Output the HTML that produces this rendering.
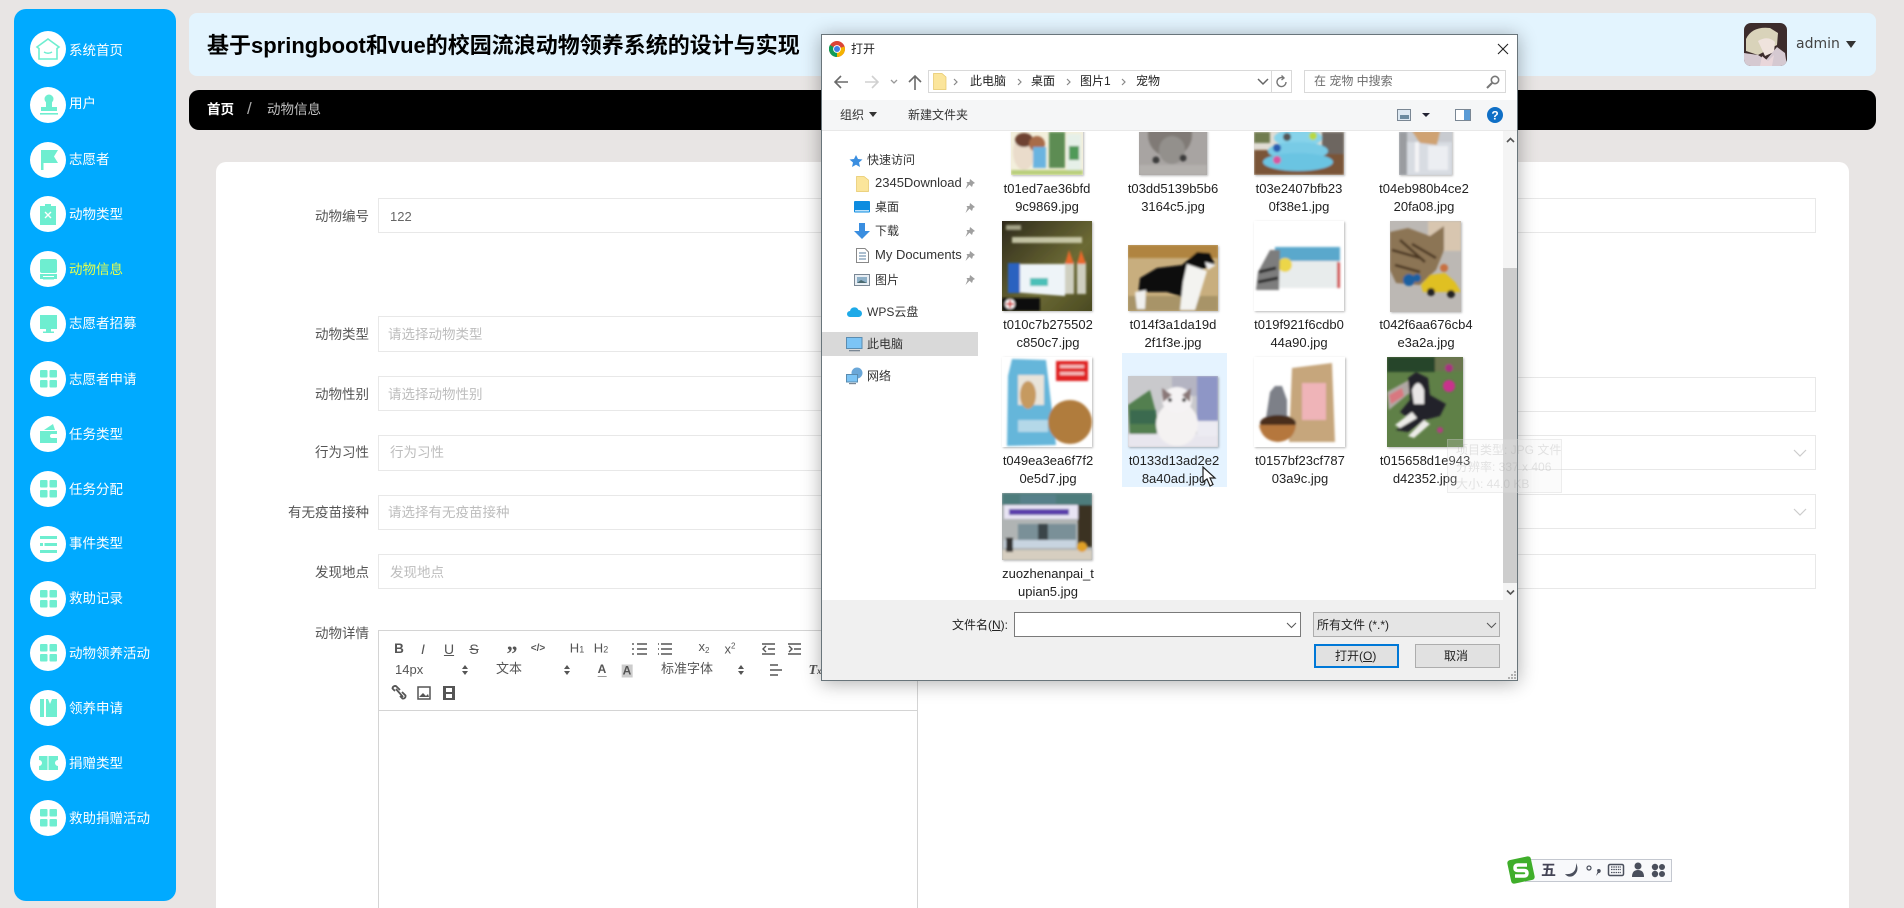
<!DOCTYPE html>
<html lang="zh"><head><meta charset="utf-8"><title>动物信息</title>
<style>
html,body{margin:0;padding:0;width:1904px;height:908px;overflow:hidden;background:#e8e5e4;font-family:"Liberation Sans","Noto Sans CJK SC",sans-serif}
#w{position:absolute;left:0;top:0;width:1904px;height:908px;overflow:hidden;background:#e8e5e4}
div,span{box-sizing:border-box}
.a{position:absolute}
.t{position:absolute;white-space:nowrap;line-height:20px;height:20px}
.nc{position:absolute;left:30px;width:36px;height:36px;border-radius:50%;background:#fff}
.nc svg{position:absolute;left:0;top:0}
.nt{position:absolute;left:69px;color:#fff;font-size:13.5px;line-height:20px;white-space:nowrap}
.lb{position:absolute;right:1535px;color:#555;font-size:13.5px;line-height:20px;white-space:nowrap}
.ip{position:absolute;height:35px;border:1px solid #e8e8e8;background:#fff}
.ph{position:absolute;color:#bdbdbd;font-size:13.5px;line-height:20px;white-space:nowrap}
.ed{position:absolute;color:#555;line-height:16px;white-space:nowrap;font-size:13px;transform:translate(-50%,-50%)}
.sn{position:absolute;left:875px;color:#333;font-size:12px;line-height:16px;white-space:nowrap}
.fn{position:absolute;width:104px;text-align:center;color:#222;font-size:13px;line-height:18px;white-space:nowrap}
.g{fill:#6eeed0}
</style></head><body><div id="w">

<!-- sidebar -->
<div class="a" style="left:14px;top:9px;width:162px;height:892px;background:#00aaff;border-radius:12px"></div>

<div class="nc" style="top:31px"><svg width="36" height="36" fill="none" stroke="#6eeed0" stroke-width="1.6"><path d="M18 8 L29 16 L27 17.5 V28 H9 V17.5 L7 16Z"/><path d="M14 21 q4 2.5 8 0" stroke-width="1.4"/></svg></div>
<div class="nt" style="top:41px">系统首页</div>
<div class="nc" style="top:87px"><svg width="36" height="36"><circle class="g" cx="19" cy="12" r="4.5"/><rect class="g" x="16" y="14" width="6" height="6"/><rect class="g" x="11" y="20" width="16" height="4"/><rect class="g" x="10" y="26" width="18" height="1.6"/></svg></div>
<div class="nt" style="top:94px">用户</div>
<div class="nc" style="top:142px"><svg width="36" height="36"><rect class="g" x="11" y="8" width="2.5" height="20"/><path class="g" d="M13.5 8 H28 L24 14.5 L28 21 H13.5Z"/></svg></div>
<div class="nt" style="top:150px">志愿者</div>
<div class="nc" style="top:196px"><svg width="36" height="36"><path class="g" d="M10 10 H15 V8 H21 V10 H26 V29 H10Z"/><path d="M15 16 L21 22 M21 16 L15 22" stroke="#fff" stroke-width="1.4"/></svg></div>
<div class="nt" style="top:205px">动物类型</div>
<div class="nc" style="top:251px"><svg width="36" height="36"><rect class="g" x="10" y="8" width="17" height="14" rx="2"/><path class="g" d="M10 23 H27 V28 H24 V25 H13 V28 H10Z"/><rect class="g" x="13" y="26" width="11" height="2.5"/></svg></div>
<div class="nt" style="top:260px;color:#e4ff4e">动物信息</div>
<div class="nc" style="top:306px"><svg width="36" height="36"><rect class="g" x="10" y="9" width="17" height="14"/><rect class="g" x="16" y="23" width="5" height="2.5"/><rect class="g" x="13" y="25.5" width="11" height="1.5"/></svg></div>
<div class="nt" style="top:314px">志愿者招募</div>
<div class="nc" style="top:361px"><svg width="36" height="36"><rect class="g" x="10" y="9" width="7.5" height="7.5" rx="1"/><rect class="g" x="19.5" y="9" width="7.5" height="7.5" rx="1"/><rect class="g" x="10" y="19" width="7.5" height="7.5" rx="1"/><rect class="g" x="19.5" y="19" width="7.5" height="7.5" rx="1"/></svg></div>
<div class="nt" style="top:370px">志愿者申请</div>
<div class="nc" style="top:416px"><svg width="36" height="36"><path class="g" d="M10 15 H27 V27 H10Z"/><path class="g" d="M14 14 L23 8 L25 14Z"/><path d="M27 18 H22 a1.8 1.8 0 0 0 0 4 H27Z" fill="#fff"/></svg></div>
<div class="nt" style="top:425px">任务类型</div>
<div class="nc" style="top:471px"><svg width="36" height="36"><rect class="g" x="10" y="9" width="7.5" height="7.5" rx="1"/><rect class="g" x="19.5" y="9" width="7.5" height="7.5" rx="1"/><rect class="g" x="10" y="19" width="7.5" height="7.5" rx="1"/><rect class="g" x="19.5" y="19" width="7.5" height="7.5" rx="1"/></svg></div>
<div class="nt" style="top:480px">任务分配</div>
<div class="nc" style="top:526px"><svg width="36" height="36"><rect class="g" x="10" y="10" width="17" height="3"/><rect class="g" x="10" y="17" width="17" height="3"/><rect class="g" x="10" y="24" width="17" height="3"/><rect x="13" y="17" width="1.5" height="3" fill="#fff"/></svg></div>
<div class="nt" style="top:534px">事件类型</div>
<div class="nc" style="top:581px"><svg width="36" height="36"><rect class="g" x="10" y="9" width="7.5" height="7.5" rx="1"/><rect class="g" x="19.5" y="9" width="7.5" height="7.5" rx="1"/><rect class="g" x="10" y="19" width="7.5" height="7.5" rx="1"/><rect class="g" x="19.5" y="19" width="7.5" height="7.5" rx="1"/></svg></div>
<div class="nt" style="top:589px">救助记录</div>
<div class="nc" style="top:635px"><svg width="36" height="36"><rect class="g" x="10" y="9" width="7.5" height="7.5" rx="1"/><rect class="g" x="19.5" y="9" width="7.5" height="7.5" rx="1"/><rect class="g" x="10" y="19" width="7.5" height="7.5" rx="1"/><rect class="g" x="19.5" y="19" width="7.5" height="7.5" rx="1"/></svg></div>
<div class="nt" style="top:644px">动物领养活动</div>
<div class="nc" style="top:690px"><svg width="36" height="36"><path class="g" d="M10 9 H14 V27 H10Z M16 9 H18 L20 14 L22 9 H27 V27 H16Z"/></svg></div>
<div class="nt" style="top:699px">领养申请</div>
<div class="nc" style="top:745px"><svg width="36" height="36"><path class="g" d="M9 11 H28 V15 a3 3 0 0 0 0 6 V25 H9 V21 a3 3 0 0 0 0 -6Z"/><rect x="17" y="11" width="2" height="14" fill="#fff" opacity=".5"/></svg></div>
<div class="nt" style="top:754px">捐赠类型</div>
<div class="nc" style="top:800px"><svg width="36" height="36"><rect class="g" x="10" y="9" width="7.5" height="7.5" rx="1"/><rect class="g" x="19.5" y="9" width="7.5" height="7.5" rx="1"/><rect class="g" x="10" y="19" width="7.5" height="7.5" rx="1"/><rect class="g" x="19.5" y="19" width="7.5" height="7.5" rx="1"/></svg></div>
<div class="nt" style="top:809px">救助捐赠活动</div>

<!-- header -->
<div class="a" style="left:189px;top:13px;width:1687px;height:63px;background:#e3f4fe;border-radius:8px"></div>
<div class="t" style="left:207px;top:34px;height:24px;line-height:24px;font-size:22px;font-weight:700;color:#000">基于springboot和vue的校园流浪动物领养系统的设计与实现</div>
<svg class="a" style="left:1744px;top:23px;border-radius:7px" width="43" height="43">
<rect width="43" height="43" fill="#3c2c2c"/><path d="M2 16 Q8 3 26 5 L34 10 L33 22 L14 32 L2 28Z" fill="#d9d3ba"/><path d="M14 18 Q24 12 31 19 L30 29 L21 33 Z" fill="#efe3dd"/><path d="M0 30 L14 32 L22 37 L33 24 L41 30 L43 43 H0Z" fill="#d5c9d1"/><path d="M18 33 L24 38 L30 32 L28 43 H16Z" fill="#e9d6da"/></svg>
<div class="t" style="left:1796px;top:34px;font-family:'DejaVu Sans',sans-serif;font-size:14px;color:#444">admin</div>
<svg class="a" style="left:1845px;top:40px" width="12" height="9"><path d="M1 1 H11 L6 8Z" fill="#333"/></svg>

<!-- breadcrumb -->
<div class="a" style="left:189px;top:90px;width:1687px;height:40px;background:#000;border-radius:10px"></div>
<div class="t" style="left:207px;top:100px;font-size:13.5px;font-weight:700;color:#fff">首页</div>
<div class="t" style="left:247px;top:99px;font-size:17px;color:#aaa">/</div>
<div class="t" style="left:267px;top:100px;font-size:13.5px;color:#c0c0c0">动物信息</div>

<!-- card -->
<div class="a" style="left:216px;top:162px;width:1633px;height:760px;background:#fff;border-radius:10px"></div>

<div class="lb" style="top:207px">动物编号</div>
<div class="ip" style="left:378px;top:198px;width:460px"></div>
<div class="t" style="left:390px;top:207px;font-size:13px;color:#666">122</div>

<div class="lb" style="top:325px">动物类型</div>
<div class="ip" style="left:378px;top:316px;width:460px;height:36px"></div>
<div class="ph" style="left:388px;top:325px">请选择动物类型</div>

<div class="lb" style="top:385px">动物性别</div>
<div class="ip" style="left:378px;top:376px;width:460px"></div>
<div class="ph" style="left:388px;top:385px">请选择动物性别</div>

<div class="lb" style="top:443px">行为习性</div>
<div class="ip" style="left:378px;top:435px;width:460px;height:36px"></div>
<div class="ph" style="left:390px;top:443px">行为习性</div>

<div class="lb" style="top:503px">有无疫苗接种</div>
<div class="ip" style="left:378px;top:495px;width:460px"></div>
<div class="ph" style="left:388px;top:503px">请选择有无疫苗接种</div>

<div class="lb" style="top:563px">发现地点</div>
<div class="ip" style="left:378px;top:554px;width:460px"></div>
<div class="ph" style="left:390px;top:563px">发现地点</div>

<!-- right inputs -->
<div class="ip" style="left:1500px;top:198px;width:316px"></div>
<div class="ip" style="left:1500px;top:377px;width:316px"></div>
<div class="ip" style="left:1500px;top:435px;width:316px"></div>
<div class="ip" style="left:1500px;top:494px;width:316px"></div>
<div class="ip" style="left:1500px;top:554px;width:316px"></div>
<svg class="a" style="left:1792px;top:448px" width="16" height="10"><path d="M2 2 L8 8 L14 2" fill="none" stroke="#ccc" stroke-width="1.2"/></svg>
<svg class="a" style="left:1792px;top:507px" width="16" height="10"><path d="M2 2 L8 8 L14 2" fill="none" stroke="#ccc" stroke-width="1.2"/></svg>

<!-- editor -->
<div class="lb" style="top:624px">动物详情</div>
<div class="a" style="left:378px;top:630px;width:540px;height:290px;border:1px solid #d4d4d4"></div>
<div class="a" style="left:378px;top:710px;width:540px;height:1px;background:#d4d4d4"></div>

<div class="ed" style="left:399px;top:649px;font-weight:700;font-size:13.5px">B</div>
<div class="ed" style="left:423px;top:649px;font-style:italic;font-size:14px">I</div>
<div class="ed" style="left:449px;top:649px;text-decoration:underline;font-size:14px">U</div>
<div class="ed" style="left:474px;top:649px;text-decoration:line-through;font-size:14px">S</div>
<div class="ed" style="left:512px;top:654px;font-weight:700;font-size:22px;font-family:'Liberation Serif',serif">”</div>
<div class="ed" style="left:538px;top:649px;font-size:10px;font-weight:700">&lt;/&gt;</div>
<div class="ed" style="left:577px;top:649px;font-size:13px">H<span style="font-size:9px">1</span></div>
<div class="ed" style="left:601px;top:649px;font-size:13px">H<span style="font-size:9px">2</span></div>
<svg class="a" style="left:632px;top:641px" width="175" height="16" fill="none" stroke="#555" stroke-width="1.4">
<path d="M5 3 H15 M5 8 H15 M5 13 H15 M1 2 V4 M1 7 V9 M1 12 V14"/>
<path d="M29 3 H40 M29 8 H40 M29 13 H40 M26 3 H27 M26 8 H27 M26 13 H27"/>
<path d="M130 3 H143 M136 8 H143 M130 13 H143 M134 5 L131 8 L134 11"/>
<path d="M156 3 H169 M162 8 H169 M156 13 H169 M157 5 L160 8 L157 11"/></svg>
<div class="ed" style="left:704px;top:649px;font-size:13px">x<span style="font-size:8px;vertical-align:-2px">2</span></div>
<div class="ed" style="left:730px;top:648px;font-size:13px">x<span style="font-size:8px;vertical-align:5px">2</span></div>

<div class="t" style="left:395px;top:660px;font-size:13px;color:#555">14px</div>
<div class="t" style="left:496px;top:659px;font-size:13px;color:#555">文本</div>
<div class="t" style="left:661px;top:659px;font-size:13px;color:#555">标准字体</div>
<svg class="a" style="left:460px;top:664px" width="290" height="12" fill="#555"><path d="M2 5 L5 1 L8 5Z M2 7 L5 11 L8 7Z M104 5 L107 1 L110 5Z M104 7 L107 11 L110 7Z M278 5 L281 1 L284 5Z M278 7 L281 11 L284 7Z"/></svg>
<div class="ed" style="left:602px;top:670px;font-size:12px;font-weight:700;border-bottom:1px solid #999;line-height:13px">A</div>
<div class="ed" style="left:627px;top:671px;font-size:12px;font-weight:700;background:#ccc;padding:0 1px;line-height:13px">A</div>
<svg class="a" style="left:769px;top:663px" width="14" height="14" fill="none" stroke="#555" stroke-width="1.6"><path d="M1 2 H9 M1 7 H13 M1 12 H9"/></svg>
<div class="ed" style="left:815px;top:671px;font-size:14px;font-style:italic;font-family:'Liberation Serif',serif;font-weight:700">T<span style="font-size:9px">x</span></div>

<svg class="a" style="left:391px;top:685px" width="70" height="16" fill="none" stroke="#555" stroke-width="1.8">
<path d="M4 6 L1.5 3.5 a2.5 2.5 0 0 1 4 -2 L9 5 M9 11 L11.5 13.5 a2.5 2.5 0 0 0 3 -3 L11 7 M5 4 L12 12"/>
<rect x="27" y="2" width="12" height="12" stroke-width="1.5"/><path d="M28 12 L32 8 L35 11 L37 9 L38 12Z" fill="#555" stroke="none"/>
<rect x="52" y="1" width="12" height="14" fill="#555" stroke="none"/><rect x="55" y="3" width="6" height="4" fill="#fff" stroke="none"/><rect x="55" y="9" width="6" height="4" fill="#fff" stroke="none"/></svg>

<!-- Dialog -->
<div class="a" style="left:821px;top:34px;width:697px;height:647px;background:#fff;border:1px solid #69757b;box-shadow:0 2px 18px rgba(0,0,0,.32)"></div>
<svg class="a" style="left:829px;top:41px" width="16" height="16"><circle cx="8" cy="8" r="8" fill="#db4437"/><path d="M8 8 L1.2 12.2 A8 8 0 0 0 8 16 Z" fill="#0f9d58"/><path d="M8 8 L1.2 12.2 A8 8 0 0 1 1 4 Z" fill="#0f9d58"/><path d="M8 8 L15.5 5.5 A8 8 0 0 1 8 16 Z" fill="#f4b400"/><circle cx="8" cy="8" r="3.9" fill="#fff"/><circle cx="8" cy="8" r="3" fill="#3f7ee8"/></svg>
<div class="t" style="left:851px;top:39px;font-size:12px;color:#222">打开</div>
<svg class="a" style="left:1497px;top:43px" width="12" height="12"><path d="M1 1 L11 11 M11 1 L1 11" stroke="#222" stroke-width="1.1"/></svg>

<svg class="a" style="left:832px;top:72px" width="95" height="20" fill="none">
<path d="M16 10 H4 M9 4 L3 10 L9 16" stroke="#6a6a6a" stroke-width="1.6"/>
<path d="M33 10 H45 M40 4 L46 10 L40 16" stroke="#d0d0d0" stroke-width="1.6"/>
<path d="M59 8 L62 11 L65 8" stroke="#999" stroke-width="1.3"/>
<path d="M83 18 V5 M77 10 L83 4 L89 10" stroke="#6a6a6a" stroke-width="1.6"/></svg>
<div class="a" style="left:928px;top:70px;width:344px;height:23px;border:1px solid #d9d9d9"></div>
<div class="a" style="left:1271px;top:70px;width:21px;height:23px;border:1px solid #d9d9d9"></div>
<div class="a" style="left:1304px;top:70px;width:202px;height:23px;border:1px solid #d9d9d9"></div>
<svg class="a" style="left:933px;top:73px" width="14" height="17"><path d="M0.5 0.5 H9 L13 4 V16.5 H0.5Z" fill="#fbe59b" stroke="#e6c768" stroke-width=".7"/></svg>
<svg class="a" style="left:950px;top:76px" width="270" height="12" fill="none" stroke="#888" stroke-width="1.2"><path d="M4 3 L7 6 L4 9 M68 3 L71 6 L68 9 M117 3 L120 6 L117 9 M172 3 L175 6 L172 9"/></svg>
<div class="t" style="left:970px;top:71px;font-size:12px;color:#222">此电脑</div>
<div class="t" style="left:1031px;top:71px;font-size:12px;color:#222">桌面</div>
<div class="t" style="left:1080px;top:71px;font-size:12px;color:#222">图片1</div>
<div class="t" style="left:1136px;top:71px;font-size:12px;color:#222">宠物</div>
<svg class="a" style="left:1257px;top:78px" width="12" height="8"><path d="M1 1 L6 6 L11 1" fill="none" stroke="#666" stroke-width="1.5"/></svg>
<svg class="a" style="left:1276px;top:75px" width="12" height="13" fill="none" stroke="#777" stroke-width="1.4"><path d="M10 7 a4.5 4.5 0 1 1 -3 -4.2"/><path d="M5.5 0.5 L8 3 L5.5 5" /></svg>
<div class="t" style="left:1314px;top:71px;font-size:12px;color:#6d6d6d">在 宠物 中搜索</div>
<svg class="a" style="left:1486px;top:75px" width="14" height="14" fill="none" stroke="#777" stroke-width="1.6"><circle cx="9" cy="5" r="3.7"/><path d="M6 8 L1 13" stroke-width="2"/></svg>

<div class="a" style="left:822px;top:100px;width:695px;height:31px;background:#f5f6f7;border-bottom:1px solid #e8e8e8"></div>
<div class="t" style="left:840px;top:105px;font-size:12px;color:#333">组织</div>
<svg class="a" style="left:869px;top:112px" width="9" height="6"><path d="M0 0 H8 L4 5Z" fill="#333"/></svg>
<div class="t" style="left:908px;top:105px;font-size:12px;color:#333">新建文件夹</div>
<svg class="a" style="left:1397px;top:108px" width="90" height="16">
<rect x="0.5" y="1.5" width="13" height="11" fill="#dce8f2" stroke="#7a8794"/><rect x="3" y="7" width="9" height="4" fill="#6a8aa0"/>
<path d="M25 5 H33 L29 9Z" fill="#223"/>
<rect x="58.5" y="1.5" width="15" height="11" fill="#fff" stroke="#7a8794"/><rect x="67" y="2" width="6" height="10" fill="#5b9bd5"/></svg>
<svg class="a" style="left:1487px;top:107px" width="16" height="16"><circle cx="8" cy="8" r="8" fill="#0f6fc6"/><text x="8" y="12.5" text-anchor="middle" font-family="Liberation Sans" font-size="12" font-weight="700" fill="#fff">?</text></svg>

<!-- nav pane -->
<div class="a" style="left:822px;top:332px;width:156px;height:24px;background:#d9d9d9"></div>
<svg class="a" style="left:849px;top:154px" width="14" height="14"><path d="M7 1 L9 5 L13.5 5.5 L10 8.5 L11 13 L7 10.7 L3 13 L4 8.5 L0.5 5.5 L5 5Z" fill="#3a8ee0"/></svg>
<div class="t" style="left:867px;top:150px;font-size:12px;color:#333">快速访问</div>
<svg class="a" style="left:856px;top:176px" width="13" height="16"><path d="M0.5 0.5 H8 L12.5 4 V15.5 H0.5Z" fill="#fbe59b" stroke="#e6c768" stroke-width=".7"/></svg>
<div class="sn" style="top:175px;font-size:13px">2345Download</div>
<svg class="a" style="left:854px;top:201px" width="16" height="12"><rect width="16" height="11.5" fill="#0d8ce0" rx="1"/><rect x="1" y="9" width="14" height="1.5" fill="#bfe3fb"/></svg>
<div class="sn" style="top:199px">桌面</div>
<svg class="a" style="left:854px;top:223px" width="16" height="16"><path d="M5 0 H11 V8 H16 L8 16 L0 8 H5Z" fill="#3a8ee0"/></svg>
<div class="sn" style="top:223px">下载</div>
<svg class="a" style="left:856px;top:248px" width="13" height="15"><path d="M0.5 0.5 H9 L12.5 4 V14.5 H0.5Z" fill="#fff" stroke="#888"/><path d="M3 5 H10 M3 8 H10 M3 11 H10" stroke="#5a7fa0"/></svg>
<div class="sn" style="top:247px;font-size:13px">My Documents</div>
<svg class="a" style="left:854px;top:274px" width="16" height="12"><rect x=".5" y=".5" width="15" height="11" fill="#e8eef4" stroke="#7a8794"/><rect x="3" y="3" width="10" height="6" fill="#8eb0c8"/><path d="M3 9 L7 6 L13 9Z" fill="#4a6a70"/></svg>
<div class="sn" style="top:272px">图片</div>
<svg class="a" style="left:847px;top:306px" width="15" height="12"><path d="M3 11 a3 3 0 0 1 0 -6 a4.5 4.5 0 0 1 8.5 -1 a3.5 3.5 0 0 1 0 7Z" fill="#1eaae8"/></svg>
<div class="t" style="left:867px;top:302px;font-size:12px;color:#333">WPS云盘</div>
<svg class="a" style="left:846px;top:337px" width="17" height="15"><rect x=".5" y=".5" width="15.5" height="11" fill="#7cc4f5" stroke="#5a8cb0"/><rect x="3" y="13" width="11" height="1.3" fill="#7a8794"/></svg>
<div class="t" style="left:867px;top:334px;font-size:12px;color:#333">此电脑</div>
<svg class="a" style="left:846px;top:367px" width="17" height="18"><circle cx="11" cy="6" r="5.5" fill="#6aa7d8"/><rect x=".5" y="7.5" width="11" height="7.5" fill="#7cc4f5" stroke="#5a8cb0"/><rect x="3" y="16" width="7" height="1.2" fill="#7a8794"/></svg>
<div class="t" style="left:867px;top:366px;font-size:12px;color:#333">网络</div>
<svg class="a" style="left:964px;top:178px" width="13" height="112" fill="#a0a0a0"><path d="M6 1 L11 5 L9 6 L8 9 L5.500 6.800 L1.500 11 L3.500 6 L2.500 4 L5.500 4Z M6 25 L11 29 L9 30 L8 33 L5.500 30.800 L1.500 35 L3.500 30 L2.500 28 L5.500 28Z M6 49 L11 53 L9 54 L8 57 L5.500 54.800 L1.500 59 L3.500 54 L2.500 52 L5.500 52Z M6 73 L11 77 L9 78 L8 81 L5.500 78.800 L1.500 83 L3.500 78 L2.500 76 L5.500 76Z M6 97 L11 101 L9 102 L8 105 L5.500 102.800 L1.500 107 L3.500 102 L2.500 100 L5.500 100Z"/></svg>

<!-- selection highlight -->
<div class="a" style="left:1122px;top:353px;width:105px;height:134px;background:#e5f3ff"></div>

<!-- thumbnails -->
<svg class="a" style="left:0;top:0;pointer-events:none" width="1904" height="908">
<defs>
<clipPath id="c"><rect x="1000" y="132" width="503" height="468"/></clipPath>
<filter id="b" x="-5%" y="-5%" width="110%" height="110%"><feGaussianBlur stdDeviation="1"/></filter>
<filter id="s" x="-5%" y="-5%" width="110%" height="110%"><feDropShadow dx="1" dy="1" stdDeviation="1" flood-color="#000" flood-opacity=".28"/></filter>
<linearGradient id="o" x1="0" y1="0" x2="1" y2="1"><stop offset="0" stop-color="#2e2a1c"/><stop offset=".6" stop-color="#6c6a34"/><stop offset="1" stop-color="#4a4a22"/></linearGradient>
<clipPath id="t1"><rect x="1011" y="100" width="72" height="75"/></clipPath>
<clipPath id="t2"><rect x="1139" y="100" width="68" height="75"/></clipPath>
<clipPath id="t3"><rect x="1254" y="100" width="90" height="75"/></clipPath>
<clipPath id="t4"><rect x="1399" y="100" width="53" height="75"/></clipPath>
<clipPath id="t5"><rect x="1002" y="221" width="90" height="90"/></clipPath>
<clipPath id="t6"><rect x="1128" y="245" width="90" height="66"/></clipPath>
<clipPath id="t8"><rect x="1390" y="221" width="71" height="91"/></clipPath>
<clipPath id="t10"><rect x="1128" y="376" width="90" height="71"/></clipPath>
<clipPath id="t12"><rect x="1387" y="357" width="76" height="90"/></clipPath>
<clipPath id="t13"><rect x="1002" y="493" width="90" height="67"/></clipPath>
</defs>
<g clip-path="url(#c)">
<!-- row 1 -->
<g filter="url(#s)"><rect x="1011" y="100" width="72" height="75" fill="#f3efdc"/></g>
<g clip-path="url(#t1)"><g filter="url(#b)"><rect x="1011" y="170" width="72" height="5" fill="#b9cf7c"/><ellipse cx="1024" cy="152" rx="11" ry="18" fill="#eadccb"/><ellipse cx="1024" cy="140" rx="9" ry="7" fill="#6e4330"/><ellipse cx="1037" cy="144" rx="8" ry="8" fill="#a86c48"/><rect x="1033" y="147" width="13" height="21" fill="#6ab4e0"/><rect x="1049" y="132" width="16" height="36" fill="#5d8c52"/><rect x="1067" y="134" width="14" height="36" fill="#e6f0e8"/><rect x="1069" y="146" width="10" height="14" fill="#4f9a58"/></g></g>
<g filter="url(#s)"><rect x="1139" y="100" width="68" height="75" fill="#a8a4a2"/></g>
<g clip-path="url(#t2)"><g filter="url(#b)"><ellipse cx="1170" cy="135" rx="22" ry="22" fill="#807a76"/><ellipse cx="1172" cy="150" rx="13" ry="14" fill="#93908c"/><circle cx="1156" cy="160" r="3.500" fill="#3a3a3a"/><circle cx="1183" cy="158" r="3.500" fill="#3a3a3a"/><rect x="1139" y="165" width="68" height="10" fill="#b3b0ad"/></g></g>
<g filter="url(#s)"><rect x="1254" y="100" width="90" height="75" fill="#e0dcd4"/></g>
<g clip-path="url(#t3)"><g filter="url(#b)"><rect x="1254" y="150" width="90" height="25" fill="#7a5538"/><rect x="1322" y="132" width="22" height="22" fill="#6d6660"/><rect x="1254" y="132" width="16" height="11" fill="#6f7c50"/><ellipse cx="1298" cy="138" rx="24" ry="9" fill="#86d3ea"/><ellipse cx="1298" cy="151" rx="30" ry="9" fill="#78cbe6"/><ellipse cx="1298" cy="162" rx="35" ry="9" fill="#6ac4e2"/><circle cx="1277" cy="148" r="4" fill="#2a5bb0"/><circle cx="1277" cy="160" r="4" fill="#d855a0"/><circle cx="1287" cy="137" r="4" fill="#555"/><circle cx="1313" cy="136" r="4" fill="#b9d840"/></g></g>
<g filter="url(#s)"><rect x="1399" y="100" width="53" height="75" fill="#c8cbd0"/></g>
<g clip-path="url(#t4)"><g filter="url(#b)"><rect x="1405" y="142" width="47" height="33" fill="#d8dce2"/><rect x="1399" y="132" width="8" height="43" fill="#9a9ca0"/><path d="M1412 131 L1440 131 L1437 145 L1420 143Z" fill="#cfa272"/><rect x="1415" y="142" width="4" height="30" fill="#f4f4f6"/><rect x="1428" y="146" width="20" height="24" fill="#eceef2"/></g></g>

<!-- row 2 -->
<g filter="url(#s)"><rect x="1002" y="221" width="90" height="90" fill="url(#o)"/></g>
<g clip-path="url(#t5)"><g filter="url(#b)"><rect x="1012" y="237" width="70" height="6" fill="#d8d8b8" opacity=".85"/><rect x="1006" y="225" width="15" height="5" fill="#cfcfb0" opacity=".7"/><path d="M1012 264 L1065 264 V296 L1012 292Z" fill="#eef4f8"/><path d="M1008 263 L1020 263 V293 H1008Z" fill="#2a62c0"/><rect x="1030" y="278" width="18" height="8" fill="#4cc0b8"/><rect x="1065" y="262" width="9" height="32" fill="#cfcfc0"/><rect x="1077" y="262" width="9" height="32" fill="#cfcfc0"/><path d="M1065 264 L1069 250 L1074 264Z M1077 264 L1081 250 L1086 264Z" fill="#e8692a"/><rect x="1002" y="298" width="38" height="13" fill="#0c0c0c"/><circle cx="1010" cy="304" r="5" fill="#fff"/><rect x="1009" y="300" width="2" height="8" fill="#d02020"/><rect x="1006" y="303" width="8" height="2" fill="#d02020"/></g></g>

<g filter="url(#s)"><rect x="1128" y="245" width="90" height="66" fill="#c8ae7e"/></g>
<g clip-path="url(#t6)"><g filter="url(#b)"><rect x="1128" y="245" width="90" height="13" fill="#b0843f"/><rect x="1128" y="296" width="90" height="15" fill="#a89468"/><path d="M1140 278 L1157 268 L1182 265 L1197 252 L1210 253 L1215 265 L1200 270 L1185 282 L1185 298 L1167 292 L1147 292 L1138 295Z" fill="#0c0c0c"/><path d="M1187 264 L1207 271 L1195 310 L1180 310 L1183 282Z" fill="#f3f3f0"/><path d="M1135 292 L1146 290 L1145 309 L1137 309Z" fill="#f0f0ee"/><path d="M1205 262 L1216 265 L1208 270Z" fill="#eee"/></g></g>

<g filter="url(#s)"><rect x="1254" y="221" width="90" height="90" fill="#fff"/></g>
<g filter="url(#b)"><rect x="1275" y="247" width="65" height="14" fill="#5aa8cc"/><rect x="1275" y="261" width="65" height="27" fill="#e8ecec"/><rect x="1337" y="262" width="3" height="26" fill="#d05050"/><circle cx="1285" cy="265" r="7" fill="#ecd648"/><path d="M1256 290 L1258 272 L1270 250 L1280 250 L1279 290Z" fill="#7d7d7d"/><path d="M1259 272 L1276 268 M1258 282 L1278 278" stroke="#2a2a2a" stroke-width="3"/></g>

<g filter="url(#s)"><rect x="1390" y="221" width="71" height="91" fill="#bcb8b4"/></g>
<g clip-path="url(#t8)"><g filter="url(#b)"><rect x="1428" y="221" width="33" height="30" fill="#d8c6b0"/><path d="M1390 232 L1408 228 L1430 236 L1444 226 L1444 250 L1436 270 L1420 285 L1396 283 L1390 270Z" fill="#8c7454"/><path d="M1392 250 L1420 258 M1400 240 L1425 262 M1412 244 L1436 258 M1395 265 L1420 272" stroke="#4b3824" stroke-width="2.500"/><circle cx="1409" cy="280" r="6" fill="#1c60a0"/><circle cx="1417" cy="278" r="4" fill="#1c60a0"/><path d="M1421 285 L1430 275 L1445 273 L1455 282 L1461 292 L1423 292Z" fill="#e0c020"/><circle cx="1431" cy="292" r="4" fill="#222"/><circle cx="1451" cy="294" r="4" fill="#222"/><circle cx="1444" cy="268" r="4" fill="#c87040"/></g></g>

<!-- row 3 -->
<g filter="url(#s)"><rect x="1002" y="357" width="90" height="90" fill="#fff"/></g>
<g filter="url(#b)"><path d="M1012 359 L1046 360 L1056 445 L1007 446 L1008 376Z" fill="#65b6da"/><rect x="1018" y="375" width="26" height="30" fill="#e8e4da"/><ellipse cx="1028" cy="395" rx="8" ry="14" fill="#c69a60"/><rect x="1018" y="420" width="30" height="12" fill="#b4d8e8"/><rect x="1056" y="361" width="32" height="20" fill="#e02020"/><rect x="1060" y="365" width="24" height="3" fill="#fff" opacity=".7"/><rect x="1060" y="372" width="24" height="3" fill="#fff" opacity=".7"/><circle cx="1070" cy="422" r="22" fill="#b07c3c"/></g>

<g filter="url(#s)"><rect x="1128" y="376" width="90" height="71" fill="#c9c9cc"/></g>
<g clip-path="url(#t10)"><g filter="url(#b)"><rect x="1197" y="376" width="21" height="45" fill="#8e96c6"/><rect x="1172" y="376" width="25" height="20" fill="#b4b4c2"/><path d="M1128 405 L1150 390 L1158 420 L1156 440 L1130 440Z" fill="#537f50"/><rect x="1130" y="410" width="26" height="14" fill="#3a6a50"/><rect x="1128" y="434" width="90" height="13" fill="#e8e6ee"/><rect x="1197" y="421" width="21" height="15" fill="#ecebf2"/><ellipse cx="1177" cy="424" rx="21" ry="22" fill="#f4f2f2"/><ellipse cx="1177" cy="400" rx="15" ry="13" fill="#f5f3f4"/><path d="M1162 388 L1172 395 L1163 402Z M1191 388 L1182 395 L1190 402Z" fill="#8a7878"/><circle cx="1170" cy="400" r="2" fill="#444"/><circle cx="1184" cy="400" r="2" fill="#444"/></g></g>

<g filter="url(#s)"><rect x="1254" y="357" width="91" height="90" fill="#fff"/></g>
<g filter="url(#b)"><path d="M1292 368 L1332 363 L1335 442 L1289 442Z" fill="#c6a67c"/><rect x="1302" y="383" width="24" height="37" fill="#efb4b8"/><path d="M1266 418 L1270 392 L1275 386 L1282 386 L1287 400 L1287 418Z" fill="#7d8088"/><ellipse cx="1278" cy="423" rx="18" ry="8" fill="#4a2e1c"/><path d="M1259 425 H1296 Q1294 441 1278 442 Q1262 441 1259 425Z" fill="#b5773e"/></g>

<g filter="url(#s)"><rect x="1387" y="357" width="76" height="90" fill="#5f8046"/></g>
<g clip-path="url(#t12)"><g filter="url(#b)"><rect x="1387" y="357" width="48" height="15" fill="#28452c"/><rect x="1435" y="357" width="28" height="14" fill="#6c7450"/><path d="M1387 392 L1420 374 L1425 380 L1389 410Z" fill="#b0a8a4"/><path d="M1389 395 L1402 388 L1404 396 L1391 404Z" fill="#d87880"/><path d="M1408 378 L1416 372 L1428 378 L1430 395 L1446 404 L1440 416 L1425 420 L1408 432 L1396 430 L1408 418 L1400 412 L1410 400Z" fill="#24242a"/><path d="M1412 390 Q1418 376 1424 390 L1424 404 L1414 404Z" fill="#e8e6e6"/><path d="M1395 425 L1412 412 L1417 418 L1400 428Z M1408 436 L1424 420 L1430 424 L1414 438Z" fill="#ecebe8"/><circle cx="1449" cy="386" r="6" fill="#c8308c"/><circle cx="1449" cy="368" r="4" fill="#a83080"/><circle cx="1440" cy="430" r="3" fill="#b04080"/></g></g>

<!-- row 4 -->
<g filter="url(#s)"><rect x="1002" y="493" width="90" height="67" fill="#b0b4b4"/></g>
<g clip-path="url(#t13)"><g filter="url(#b)"><rect x="1002" y="493" width="90" height="12" fill="#4e7c7c"/><rect x="1020" y="495" width="36" height="9" fill="#57808a"/><rect x="1004" y="505" width="74" height="14" fill="#e8e4f4"/><rect x="1009" y="509" width="60" height="6" fill="#5a3caa"/><rect x="1078" y="505" width="14" height="42" fill="#3a3024"/><rect x="1018" y="524" width="58" height="20" fill="#7a9098"/><rect x="1038" y="524" width="10" height="20" fill="#3a4448"/><rect x="1004" y="540" width="72" height="8" fill="#c8d4e0"/><rect x="1002" y="550" width="90" height="10" fill="#d6cec0"/><circle cx="1082" cy="547" r="5" fill="#e0a028"/><rect x="1006" y="538" width="7" height="14" fill="#333"/></g></g>
</g>
</svg>

<!-- file names -->
<div class="fn" style="left:995px;top:180px">t01ed7ae36bfd<br>9c9869.jpg</div>
<div class="fn" style="left:1121px;top:180px">t03dd5139b5b6<br>3164c5.jpg</div>
<div class="fn" style="left:1247px;top:180px">t03e2407bfb23<br>0f38e1.jpg</div>
<div class="fn" style="left:1372px;top:180px">t04eb980b4ce2<br>20fa08.jpg</div>
<div class="fn" style="left:996px;top:316px">t010c7b275502<br>c850c7.jpg</div>
<div class="fn" style="left:1121px;top:316px">t014f3a1da19d<br>2f1f3e.jpg</div>
<div class="fn" style="left:1247px;top:316px">t019f921f6cdb0<br>44a90.jpg</div>
<div class="fn" style="left:1374px;top:316px">t042f6aa676cb4<br>e3a2a.jpg</div>
<div class="fn" style="left:996px;top:452px">t049ea3ea6f7f2<br>0e5d7.jpg</div>
<div class="fn" style="left:1122px;top:452px">t0133d13ad2e2<br>8a40ad.jpg</div>
<div class="fn" style="left:1248px;top:452px">t0157bf23cf787<br>03a9c.jpg</div>
<div class="fn" style="left:1373px;top:452px">t015658d1e943<br>d42352.jpg</div>
<div class="fn" style="left:996px;top:565px">zuozhenanpai_t<br>upian5.jpg</div>

<svg class="a" style="left:1201px;top:466px" width="16" height="22"><path d="M2 1 V16 L6 13 L9 20 L12 18.5 L9 12 L14 12Z" fill="#fff" stroke="#222" stroke-width="1.2"/></svg>

<!-- scrollbar -->
<div class="a" style="left:1503px;top:131px;width:14px;height:469px;background:#f4f4f4"></div>
<div class="a" style="left:1503px;top:268px;width:14px;height:315px;background:#cdcdcd"></div>
<svg class="a" style="left:1506px;top:137px" width="9" height="7"><path d="M1 5 L4.500 1.500 L8 5" fill="none" stroke="#555" stroke-width="1.6"/></svg>
<svg class="a" style="left:1506px;top:589px" width="9" height="7"><path d="M1 1.500 L4.500 5 L8 1.500" fill="none" stroke="#555" stroke-width="1.6"/></svg>

<!-- footer -->
<div class="a" style="left:822px;top:600px;width:695px;height:80px;background:#f0f0f0"></div>
<div class="t" style="left:952px;top:615px;font-size:12px;color:#222">文件名(<u>N</u>):</div>
<div class="a" style="left:1014px;top:612px;width:287px;height:25px;background:#fff;border:1px solid #7a7a7a"></div>
<svg class="a" style="left:1286px;top:622px" width="11" height="7"><path d="M1 1 L5.500 5.500 L10 1" fill="none" stroke="#555"/></svg>
<div class="a" style="left:1313px;top:612px;width:187px;height:25px;background:#e5e5e5;border:1px solid #adadad"></div>
<div class="t" style="left:1317px;top:615px;font-size:12px;color:#222">所有文件 (*.*)</div>
<svg class="a" style="left:1486px;top:622px" width="11" height="7"><path d="M1 1 L5.500 5.500 L10 1" fill="none" stroke="#555"/></svg>
<div class="a" style="left:1314px;top:644px;width:85px;height:24px;background:#e1e1e1;border:2px solid #0078d7"></div>
<div class="t" style="left:1335px;top:646px;font-size:12px;color:#222">打开(<u>O</u>)</div>
<div class="a" style="left:1415px;top:644px;width:85px;height:24px;background:#e1e1e1;border:1px solid #adadad"></div>
<div class="t" style="left:1444px;top:646px;font-size:12px;color:#222">取消</div>
<svg class="a" style="left:1507px;top:670px" width="10" height="10" fill="#b0b0b0"><rect x="7" y="1" width="2" height="2"/><rect x="4" y="4" width="2" height="2"/><rect x="7" y="4" width="2" height="2"/><rect x="1" y="7" width="2" height="2"/><rect x="4" y="7" width="2" height="2"/><rect x="7" y="7" width="2" height="2"/></svg>

<!-- tooltip ghost -->
<div class="a" style="left:1447px;top:439px;width:115px;height:54px;background:rgba(235,235,235,.22);border:1px solid rgba(200,200,200,.28);padding:2px 8px;font-size:12px;line-height:17px;color:rgba(150,150,150,.25);white-space:nowrap">项目类型: JPG 文件<br>分辨率: 337 x 406<br>大小: 44.0 KB</div>

<!-- IME bar -->
<div class="a" style="left:1525px;top:859px;width:147px;height:23px;background:#f8f9fb;border:1px solid #c4c8d0"></div>
<svg class="a" style="left:1507px;top:855px" width="29" height="30"><rect x="2" y="3" width="24" height="24" rx="3" transform="rotate(-12 14 15)" fill="#3fae2a"/><path d="M20 10 H11 Q8 10 8 13 Q8 15.500 11 15.500 H17 Q20 15.500 20 18 Q20 21 17 21 H8" fill="none" stroke="#fff" stroke-width="3.500"/></svg>
<div class="t" style="left:1541px;top:861px;font-size:15px;color:#445;font-weight:700">五</div>
<svg class="a" style="left:1564px;top:862px" width="106" height="18" fill="#4a4f5c"><path d="M12 1 Q16 9 9 14 Q4 16 1 12 Q8 13 11 8 Q12.500 4 12 1Z"/><circle cx="25" cy="6" r="2" fill="none" stroke="#4a4f5c" stroke-width="1.200"/><path d="M33 8 a2 2 0 1 1 1.500 3 L32 14 L33.500 10Z"/><rect x="44.500" y="2.500" width="15" height="11" rx="1.500" fill="none" stroke="#4a4f5c" stroke-width="1.500"/><path d="M47 5 H57 M47 7.500 H57 M47 10.500 H57" stroke="#4a4f5c" stroke-width="1.300" stroke-dasharray="1.500 .8"/><circle cx="74" cy="4" r="3.500"/><path d="M68 15 Q68 8 74 8 Q80 8 80 15Z"/><circle cx="91" cy="5" r="3.200"/><circle cx="98" cy="5" r="3"/><circle cx="91" cy="12" r="3.200"/><circle cx="98" cy="12" r="3"/></svg>

</div></body></html>
